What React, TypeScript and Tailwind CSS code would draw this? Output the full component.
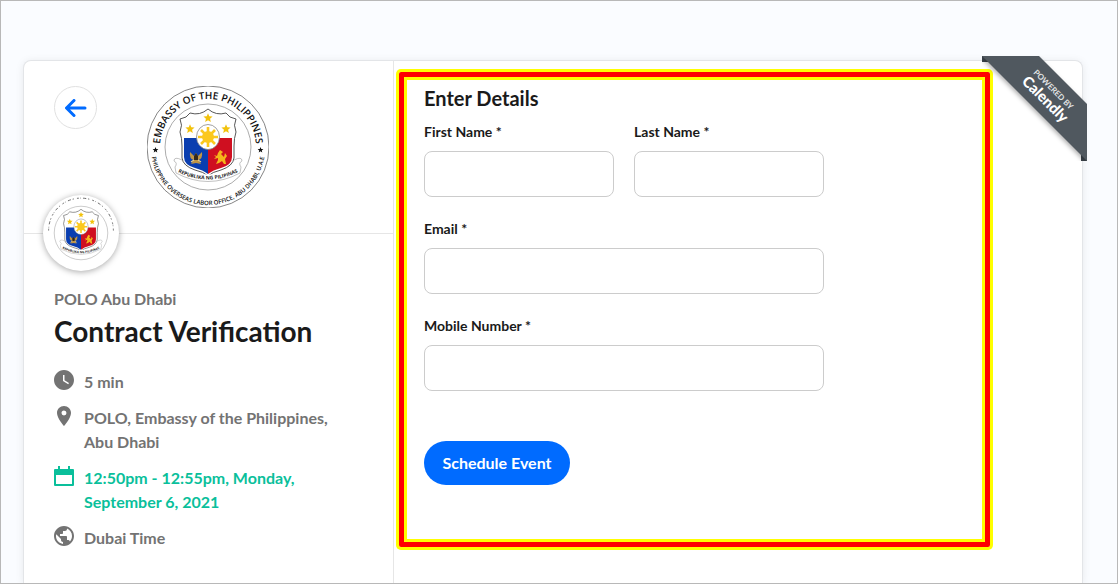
import { useId } from "react";

import { MdPlace, MdPublic, MdWatchLater } from "react-icons/md";

const inputClass =
    "h-[46px] w-full rounded-lg border border-[#cccccc] bg-white px-3 text-base outline-none focus:border-[#006bff]";

const labelClass = "flex flex-col gap-[9px] text-sm leading-5 font-bold text-[#1a1a1a]";

interface StarProps {
    x: number;
    y: number;
    r: number;
    fill: string;
}

function Star({ x, y, r, fill }: StarProps) {
    const points = Array.from({ length: 10 }, (_, i) => {
        const radius = i % 2 === 0 ? r : r * 0.45;
        const angle = (Math.PI / 5) * i - Math.PI / 2;
        return `${x + radius * Math.cos(angle)},${y + radius * Math.sin(angle)}`;
    }).join(" ");

    return <polygon points={points} fill={fill} />;
}

function Seal({ compact = false }: { compact?: boolean }) {
    const id = useId();

    return (
        <svg viewBox="0 0 122 122" className="block h-full w-full" role="img" aria-label="Embassy seal">
            <defs>
                <path id={`${id}-top`} d="M13 61 A48 48 0 0 1 109 61" />
                <path id={`${id}-bottom`} d="M4 62 A57 57 0 0 0 118 62" />
                <path id={`${id}-banner`} d="M29 85 Q61 102 93 85" />
            </defs>

            {!compact && <circle cx="61" cy="61" r="61" fill="none" stroke="#666" strokeWidth="0.8" />}
            <circle cx="61" cy="61" r="43" fill="none" stroke="#888" strokeWidth="0.7" />

            {compact ? (
                <path
                    d="M9 57 A52 52 0 0 1 113 57"
                    fill="none"
                    stroke="#555"
                    strokeWidth="1.4"
                    strokeDasharray="3 2 1 4 5 3 2 5"
                />
            ) : (
                <>
                    <text fontSize="10" fontWeight="600" fill="#111" textAnchor="middle" fontFamily="Open Sans, sans-serif">
                        <textPath href={`#${id}-top`} startOffset="50%">EMBASSY OF THE PHILIPPINES</textPath>
                    </text>
                    <text fontSize="6" fontWeight="600" fill="#111" textAnchor="middle" fontFamily="Open Sans, sans-serif">
                        <textPath href={`#${id}-bottom`} startOffset="50%">
                            PHILIPPINE OVERSEAS LABOR OFFICE, ABU DHABI, U.A.E
                        </textPath>
                    </text>
                    <Star x={8.5} y={64} r={3} fill="#111" />
                    <Star x={113.5} y={64} r={3} fill="#111" />
                </>
            )}

            {/* shield */}
            <path
                d="M61 23 Q53 30 43 27 Q40 32 33 33 Q36 39 33 46 Q35 52 35 60 V72 Q36 80 48 84 Q57 86 61 90 Q65 86 74 84 Q86 80 87 72 V60 Q87 52 89 46 Q86 39 89 33 Q82 32 79 27 Q69 30 61 23 Z"
                fill="#fff"
                stroke="#444"
                strokeWidth="0.9"
            />
            <path d="M37 52 H61 V88 Q56 84 48 82 Q37 79 37 71 Z" fill="#0a3eb0" />
            <path d="M85 52 H61 V88 Q66 84 74 82 Q85 79 85 71 Z" fill="#cf0f20" />
            <Star x={61} y={32} r={4.8} fill="#f2c20c" />
            <Star x={43} y={43} r={4.8} fill="#f2c20c" />
            <Star x={79} y={43} r={4.8} fill="#f2c20c" />

            {/* sun */}
            <ellipse cx="61" cy="51" rx="11.5" ry="12.5" fill="#fff" stroke="#777" strokeWidth="0.7" />
            <circle cx="61" cy="51" r="6" fill="#fbc81e" />
            <path
                d="M61 41 V61 M51 51 H71 M54 44 L68 58 M68 44 L54 58"
                stroke="#fbc81e"
                strokeWidth="2.6"
            />

            {/* eagle and lion */}
            <path d="M43 66 L47 70 L49 67 L51 70 L55 66 Q56 73 51 74 L54 78 L49 77 L44 78 L47 74 Q42 73 43 66 Z" fill="#c09545" />
            <path d="M47 70 L49 67 L51 70 V74 H47 Z" fill="#32291b" />
            <path d="M44 76 L47 74 M54 76 L51 74" stroke="#f0d587" strokeWidth="1.2" />
            <path
                d="M71 67 L73 64 L76 66 L74 68 L77 71 L78 67 L80 70 L78 73 L79 78 L77 78 L75 75 L72 77 L69 78 L71 74 L71 72 L67 73 L69 71 L67 69 L70 70 Z"
                fill="#f5b51b"
            />

            {/* banner */}
            <path
                d="M35 74 Q27 70 27 75 Q31 77 28 81 L29 87 Q61 104 93 87 L94 81 Q91 77 95 75 Q95 70 87 74"
                fill="none"
                stroke="#999"
                strokeWidth="0.6"
            />
            <path d="M31 83 Q61 99 91 83" fill="none" stroke="#fff" strokeWidth="5" />
            <text fontSize="5" fontWeight="700" fill="#222" textAnchor="middle" fontFamily="Open Sans, sans-serif">
                <textPath href={`#${id}-banner`} startOffset="50%">REPUBLIKA NG PILIPINAS</textPath>
            </text>
        </svg>
    );
}

function CalendlyRibbon() {
    return (
        <a href="#calendly" aria-label="Powered by Calendly" className="absolute -top-[5px] -right-[5px] h-[105px] w-[105px]">
            <svg viewBox="0 0 105 105" className="block h-full w-full font-bold">
                <path d="M0 0 H6 V6 H0 Z M99 99 H105 V105 H99 Z" fill="#3d454d" />
                <path d="M0 0 H57 L105 48 V105 Z" className="fill-[#50585f] drop-shadow-[-1px_2px_2px_rgba(0,0,0,0.3)]" />
                <g transform="rotate(45 66 39)" textAnchor="middle">
                    <text x="66" y="34" fontSize="8" fill="#e2e4e6">POWERED BY</text>
                    <text x="67" y="49" fontSize="15" fontWeight="900" fill="#fff">Calendly</text>
                </g>
            </svg>
        </a>
    );
}

function CalendarIcon() {
    return (
        <svg viewBox="0 0 20 20" className="h-5 w-5 shrink-0" fill="currentColor">
            <path d="M4 0 H6 V3 H14 V0 H16 V3 H19 Q20 3 20 4 V19 Q20 20 19 20 H1 Q0 20 0 19 V4 Q0 3 1 3 H4 Z M2 9 V18 H18 V9 Z" fillRule="evenodd" />
        </svg>
    );
}

function EventSidebar() {
    return (
        <aside className="w-[370px] shrink-0 border-r border-[#e6e6e6]">
            <div className="relative flex h-[173px] justify-center border-b border-[#e6e6e6] pt-[25px] pr-0.5">
                <button
                    type="button"
                    aria-label="Back"
                    className="absolute top-[25px] left-[30px] flex h-[43px] w-[43px] items-center justify-center rounded-full border border-[#e1e1e1] text-[#006bff]"
                >
                    <svg viewBox="0 0 22 18" className="h-[18px] w-[22px]" fill="none" stroke="currentColor" strokeWidth="3" strokeLinecap="round" strokeLinejoin="round">
                        <path d="M9 1.500 L1.500 9 L9 16.500 M2 9 H20" />
                    </svg>
                </button>
                <div className="h-[122px] w-[122px]">
                    <Seal />
                </div>
                <div className="absolute -bottom-[38px] left-[19px] h-[76px] w-[76px] rounded-full bg-white shadow-[0_1px_6px_rgba(0,0,0,0.35)]">
                    <Seal compact />
                </div>
            </div>

            <div className="px-[30px] pt-[53px] font-bold text-[#737373]">
                <p className="text-base leading-6">POLO Abu Dhabi</p>
                <h1 className="mt-1 text-[28px] leading-8 text-[#1a1a1a]">Contract Verification</h1>
                <ul className="mt-[23px] flex flex-col gap-3 text-base leading-6">
                    <li className="flex gap-[10px]">
                        <MdWatchLater className="-m-0.5 h-6 w-6 shrink-0" />
                        5 min
                    </li>
                    <li className="flex gap-[10px]">
                        <MdPlace className="-m-0.5 h-6 w-6 shrink-0" />
                        <span>
                            POLO, Embassy of the Philippines,
                            <br />
                            Abu Dhabi
                        </span>
                    </li>
                    <li className="flex gap-[10px] text-[#0abf9b]">
                        <CalendarIcon />
                        <span>
                            12:50pm - 12:55pm, Monday,
                            <br />
                            September 6, 2021
                        </span>
                    </li>
                    <li className="flex gap-[10px]">
                        <MdPublic className="-m-0.5 h-6 w-6 shrink-0" />
                        Dubai Time
                    </li>
                </ul>
            </div>
        </aside>
    );
}

function DetailsForm() {
    return (
        <form className="px-5 pt-[9px] pb-[57px]" onSubmit={(e) => e.preventDefault()}>
            <h2 className="text-xl leading-6 font-bold text-[#1a1a1a]">Enter Details</h2>
            <div className="mt-3 flex max-w-[400px] flex-col gap-[22px]">
                <div className="grid grid-cols-2 gap-5">
                    <label className={labelClass}>
                        First Name *
                        <input type="text" name="firstName" required className={inputClass} />
                    </label>
                    <label className={labelClass}>
                        Last Name *
                        <input type="text" name="lastName" required className={inputClass} />
                    </label>
                </div>
                <label className={labelClass}>
                    Email *
                    <input type="email" name="email" required className={inputClass} />
                </label>
                <label className={labelClass}>
                    Mobile Number *
                    <input type="tel" name="mobile" required className={inputClass} />
                </label>
            </div>
            <button type="submit" className="mt-[50px] h-11 w-[146px] rounded-full bg-[#006bff] text-base font-bold text-white">
                Schedule Event
            </button>
        </form>
    );
}

export default function App() {
    return (
        <main className="flex min-h-screen flex-col border border-[#b8b8b8] bg-[#fafcff] pt-[59px] pr-[34px] pl-[22px] font-['Lato',sans-serif]">
            <div className="relative flex grow rounded-t-lg border border-b-0 border-[#e3e5e8] bg-white shadow-[0_1px_8px_rgba(0,0,0,0.08)] [clip-path:inset(-10px_-10px_0_-10px)]">
                <EventSidebar />
                <section className="mt-[11px] mr-[92px] ml-[5px] grow self-start rounded-[2px] border-5 border-[#ff0000] shadow-[0_0_0_3px_#ffff00,inset_0_0_0_3px_#ffff00]">
                    <DetailsForm />
                </section>
                <CalendlyRibbon />
            </div>
        </main>
    );
}
